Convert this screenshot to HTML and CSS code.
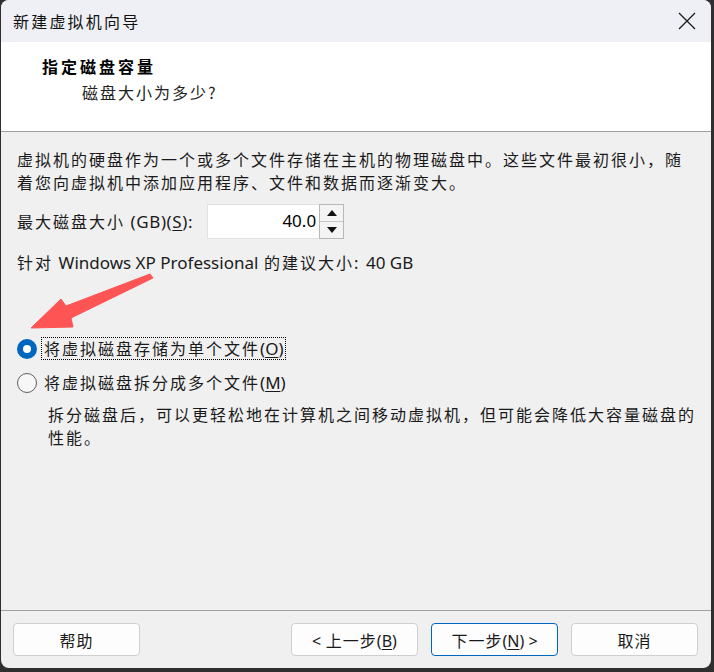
FILE: index.html
```html
<!DOCTYPE html>
<html lang="zh-CN">
<head>
<meta charset="utf-8">
<title>新建虚拟机向导</title>
<link rel="stylesheet" href="styles.css">
</head>
<body>
<div class="window">
  <div class="titlebar">
    <span class="title">新建虚拟机向导</span>
    <svg class="close" width="18" height="18" viewBox="0 0 18 18"><path d="M1 1 L17 17 M17 1 L1 17" stroke="#1b1b1b" stroke-width="1.3" fill="none"/></svg>
  </div>
  <div class="header">
    <div class="h-title">指定磁盘容量</div>
    <div class="h-sub">磁盘大小为多少?</div>
  </div>
  <div class="content">
    <p class="intro">虚拟机的硬盘作为一个或多个文件存储在主机的物理磁盘中。这些文件最初很小，随着您向虚拟机中添加应用程序、文件和数据而逐渐变大。</p>
    <div class="size-row">
      <span class="size-label">最大磁盘大小 <span class="lat">(GB)(<u>S</u>):</span></span>
      <div class="spin">
        <div class="spin-input lat">40.0</div>
        <div class="spin-btns">
          <div class="spin-btn"><svg width="10" height="6" viewBox="0 0 10 6"><path d="M0 6 L5 0 L10 6 Z" fill="#111"/></svg></div>
          <div class="spin-btn"><svg width="10" height="6" viewBox="0 0 10 6"><path d="M0 0 L10 0 L5 6 Z" fill="#111"/></svg></div>
        </div>
      </div>
    </div>
    <p class="rec">针对 <span class="lat">Windows XP Professional</span> 的建议大小: <span class="lat">40 GB</span></p>
    <div class="radios">
      <div class="radio-row">
        <span class="radio checked"></span>
        <span class="radio-label focus">将虚拟磁盘存储为单个文件<span class="lat">(<u>O</u>)</span></span>
      </div>
      <div class="radio-row">
        <span class="radio"></span>
        <span class="radio-label">将虚拟磁盘拆分成多个文件<span class="lat">(<u>M</u>)</span></span>
      </div>
      <p class="desc">拆分磁盘后，可以更轻松地在计算机之间移动虚拟机，但可能会降低大容量磁盘的性能。</p>
    </div>
  </div>
  <div class="footer">
    <div class="btn"><span>帮助</span></div>
    <div class="btn-group">
      <div class="btn"><span><span class="lat">&lt;</span>&nbsp;上一步<span class="lat">(<u>B</u>)</span></span></div>
      <div class="btn primary"><span>下一步<span class="lat">(<u>N</u>)&nbsp;&gt;</span></span></div>
      <div class="btn"><span>取消</span></div>
    </div>
  </div>
  <svg class="arrow" width="714" height="672" viewBox="0 0 714 672">
    <polygon points="31,328 61,299 66,306 150,274 153,278 71,318 73,327" fill="#fe5454" stroke="#fe5454" stroke-width="1" stroke-linejoin="round"/>
  </svg>
</div>
</body>
</html>
```

FILE: styles.css
```css
* { box-sizing: border-box; }
html, body {
  margin: 0;
  padding: 0;
  background: #2f2f2f;
  width: 714px;
  height: 672px;
  overflow: hidden;
}
body {
  font-family: "Noto Sans CJK SC", sans-serif;
  font-size: 16px;
  color: #1a1a1a;
}
.window {
  position: relative;
  margin-left: 1px;
  width: 710px;
  height: 668px;
  background: #f0f0f0;
  border-radius: 8px;
  overflow: hidden;
  display: flex;
  flex-direction: column;
}
.lat {
  font-family: "Noto Sans", sans-serif;
  font-size: 17px;
  letter-spacing: 0;
}
u { text-underline-offset: 2px; }

.titlebar {
  height: 42px;
  flex: none;
  background: #eff0f5;
  display: flex;
  align-items: center;
  padding-left: 12px;
  padding-right: 15px;
}
.title {
  font-size: 16px;
  letter-spacing: 2.2px;
  line-height: 20px;
  color: #111;
}
.close { margin-left: auto; }

.header {
  height: 90px;
  flex: none;
  background: #fff;
  border-bottom: 1px solid #a0a0a0;
  padding: 13px 0 0 41px;
}
.h-title {
  font-weight: 700;
  font-size: 16px;
  letter-spacing: 3px;
  line-height: 22px;
  color: #000;
}
.h-sub {
  margin-top: 4px;
  margin-left: 40px;
  font-size: 16px;
  letter-spacing: 2px;
  line-height: 22px;
  color: #222;
}

.content {
  flex: 1;
  padding: 16px 0 0 16px;
  letter-spacing: 2px;
}
.intro {
  margin: 0;
  width: 676px;
  line-height: 23px;
}
.size-row {
  margin-top: 10px;
  display: flex;
  align-items: center;
  height: 35px;
}
.size-label { line-height: 23px; }
.size-label .lat { letter-spacing: 0.6px; }
.spin {
  margin-left: 14px;
  display: flex;
  height: 35px;
}
.spin-input {
  width: 112px;
  height: 35px;
  background: #fff;
  border: 1px solid #e2e2e2;
  border-right: none;
  text-align: right;
  padding-right: 3px;
  line-height: 32px;
  font-size: 17px;
  color: #000;
}
.spin-btns {
  width: 25px;
  display: flex;
  flex-direction: column;
  border: 1px solid #b8b8b8;
  background: #f4f4f4;
}
.spin-btn {
  flex: 1;
  display: flex;
  align-items: center;
  justify-content: center;
}
.spin-btn + .spin-btn { border-top: 1px solid #c8c8c8; }

.rec {
  margin: 12px 0 0 0;
  line-height: 23px;
}
.radios { margin-top: 63px; }
.radio-row {
  display: flex;
  align-items: center;
  height: 23px;
  margin-bottom: 11px;
}
.radio {
  width: 20px;
  height: 20px;
  border-radius: 50%;
  border: 1px solid #5f5f5f;
  background: #f7f7f7;
  flex: none;
}
.radio.checked {
  border: 6px solid #0067c0;
  background: #fff;
}
.radio-label {
  margin-left: 4px;
  padding: 0 1px 0 2px;
  line-height: 21px;
  border: 1px solid transparent;
}
.radio-label.focus { border: 1px dotted #000; }
.desc {
  margin: -2px 0 0 31px;
  width: 660px;
  line-height: 23px;
}

.footer {
  flex: none;
  height: 58px;
  border-top: 1px solid #a0a0a0;
  padding: 12px 13px 0 12px;
  display: flex;
  align-items: flex-start;
}
.btn-group {
  margin-left: auto;
  display: flex;
  gap: 13px;
}
.btn {
  width: 127px;
  height: 33px;
  background: #fdfdfd;
  border: 1px solid #cfcfcf;
  border-radius: 4px;
  display: flex;
  align-items: center;
  justify-content: center;
  font-size: 16px;
  letter-spacing: 1px;
  color: #1a1a1a;
}
.btn .lat { font-size: 16px; }
.btn.primary { border-color: #0067c0; }
.arrow {
  position: absolute;
  left: -1px;
  top: 0;
  pointer-events: none;
}
```
